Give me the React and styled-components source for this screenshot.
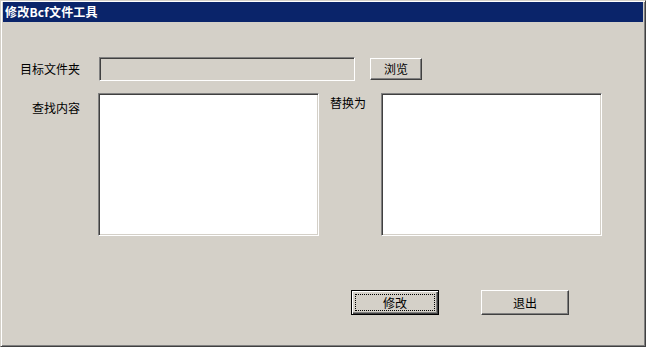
import React from 'react';
import styled, { createGlobalStyle } from 'styled-components';

const Global = createGlobalStyle`
  html, body {
    margin: 0;
    padding: 0;
    background: #d4d0c8;
  }
  * { box-sizing: border-box; }
`;

export default function App() {
  return (
    <>
      <Global />
      <UIWindow>
        <UITitleBar>修改Bcf文件工具</UITitleBar>
        <UIBody>
          <UIRow>
            <UILabel width={79}>目标文件夹</UILabel>
            <UIField disabled style={{ marginLeft: 19 }} />
            <UIButton width={52} height={22} style={{ marginLeft: 15 }}>浏览</UIButton>
          </UIRow>
          <UIEditRow>
            <UILabel width={79} top={8}>查找内容</UILabel>
            <UITextBox style={{ marginLeft: 18 }} />
            <UILabel width={36} top={3} style={{ marginLeft: 11 }}>替换为</UILabel>
            <UITextBox style={{ marginLeft: 15 }} />
          </UIEditRow>
          <UIFooter>
            <UIButton width={88} height={25} isDefault>
              <UIFocus>修改</UIFocus>
            </UIButton>
            <UIButton width={88} height={25}>退出</UIButton>
          </UIFooter>
        </UIBody>
      </UIWindow>
    </>
  );
}

const UIWindow = styled.div`
  width: 646px;
  height: 347px;
  display: flex;
  flex-direction: column;
  background: #d4d0c8;
  border: 1px solid;
  border-color: #d4d0c8 #404040 #404040 #d4d0c8;
  box-shadow: inset 1px 1px #ffffff, inset -1px -1px #808080;
  padding: 1px 2px 2px 2px;
  font-family: "Noto Sans CJK SC", "Liberation Sans", sans-serif;
  font-size: 12px;
  color: #000;
`;

const UITitleBar = styled.div`
  height: 20px;
  background: #0a246a;
  color: #ffffff;
  font-weight: 700;
  font-size: 12px;
  line-height: 20px;
  padding-left: 2px;
  letter-spacing: 0.2px;
`;

const UIBody = styled.div`
  display: flex;
  flex-direction: column;
  padding-top: 35px;
  margin-left: -2px;
`;

const UIRow = styled.div`
  display: flex;
  align-items: center;
  height: 24px;
`;

const UIEditRow = styled.div`
  display: flex;
  align-items: flex-start;
  margin-top: 12px;
`;

const UILabel = styled.div`
  width: ${p => p.width}px;
  flex-shrink: 0;
  text-align: right;
  white-space: nowrap;
  padding-top: ${p => p.top || 0}px;
  line-height: 14px;
`;

const sunken = `
  border: 1px solid;
  border-color: #808080 #ffffff #ffffff #808080;
  box-shadow: inset 1px 1px #404040, inset -1px -1px #d4d0c8;
`;

const UIField = styled.div`
  width: 256px;
  height: 24px;
  background: #d4d0c8;
  ${sunken}
`;

const UITextBox = styled.div`
  width: 221px;
  height: 143px;
  background: #ffffff;
  ${sunken}
`;

const UIButton = styled.div`
  width: ${p => p.width}px;
  height: ${p => p.height}px;
  display: flex;
  align-items: center;
  justify-content: center;
  background: #d4d0c8;
  border: 1px solid;
  border-color: ${p => (p.isDefault ? '#000000' : '#ffffff #404040 #404040 #ffffff')};
  box-shadow: ${p => (p.isDefault
    ? 'inset 1px 1px #ffffff, inset -1px -1px #404040, inset -2px -2px #808080'
    : 'inset -1px -1px #808080')};
  padding: ${p => (p.isDefault ? '3px' : '0')};
  line-height: 14px;
`;

const UIFocus = styled.div`
  flex: 1;
  align-self: stretch;
  display: flex;
  align-items: center;
  justify-content: center;
  border: 1px dotted #000000;
`;

const UIFooter = styled.div`
  display: flex;
  gap: 42px;
  margin-top: 54px;
  padding-left: 350px;
`;
